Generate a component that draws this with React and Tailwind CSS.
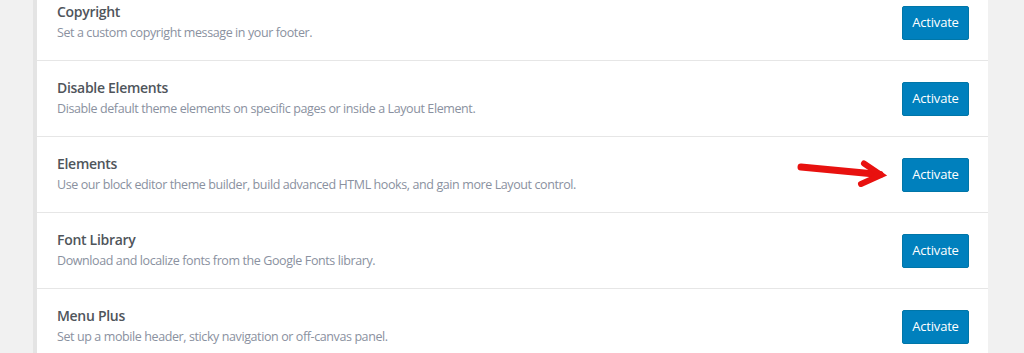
import React from 'react';

const modules = [
    { name: 'Copyright', desc: 'Set a custom copyright message in your footer.' },
    { name: 'Disable Elements', desc: 'Disable default theme elements on specific pages or inside a Layout Element.' },
    { name: 'Elements', desc: 'Use our block editor theme builder, build advanced HTML hooks, and gain more Layout control.', arrow: true },
    { name: 'Font Library', desc: 'Download and localize fonts from the Google Fonts library.' },
    { name: 'Menu Plus', desc: 'Set up a mobile header, sticky navigation or off-canvas panel.' },
];

// red annotation arrow pointing at the button
const Arrow = () => (
    <svg className="absolute left-[-106px] top-0" width="100" height="32" viewBox="0 0 100 32">
        <line x1="5" y1="9" x2="84" y2="16.5" stroke="#e8110f" strokeWidth="7" strokeLinecap="round" />
        <polyline points="68,5.5 85,17 65,26" fill="none" stroke="#e8110f" strokeWidth="6" strokeLinejoin="miter" strokeLinecap="round" />
    </svg>
);

export default function App() {
    return (
        <div className="flex h-[353px] w-[1024px] overflow-hidden bg-[#f1f1f1]" style={{ fontFamily: '"Open Sans", "Noto Sans", sans-serif' }}>
            <div className="w-[33px] shrink-0" />
            <div className="w-[4px] shrink-0 bg-[#e4e4e4]" />
            <div className="w-[951px] shrink-0 bg-white">
                <div className="mt-[-15px] flex flex-col">
                    {modules.map((m) => (
                        <div key={m.name} className="flex h-[76px] items-center justify-between border-b border-[#e6e6e6] pl-[20px] pr-[19px]">
                            <div className="flex flex-col">
                                <h3 className="text-[14px] leading-[20px] font-semibold tracking-[-0.3px] text-[#4f555b]">{m.name}</h3>
                                <p className="mt-[1px] text-[12.5px] leading-[20px] tracking-[-0.4px] text-[#8a91a0]">{m.desc}</p>
                            </div>
                            <div className="relative">
                                {m.arrow && <Arrow />}
                                <button className="h-[34px] w-[67px] rounded-[2px] border border-[#0076a8] bg-[#0080bd] text-[13px] tracking-[-0.2px] text-white">
                                    Activate
                                </button>
                            </div>
                        </div>
                    ))}
                </div>
            </div>
        </div>
    );
}
